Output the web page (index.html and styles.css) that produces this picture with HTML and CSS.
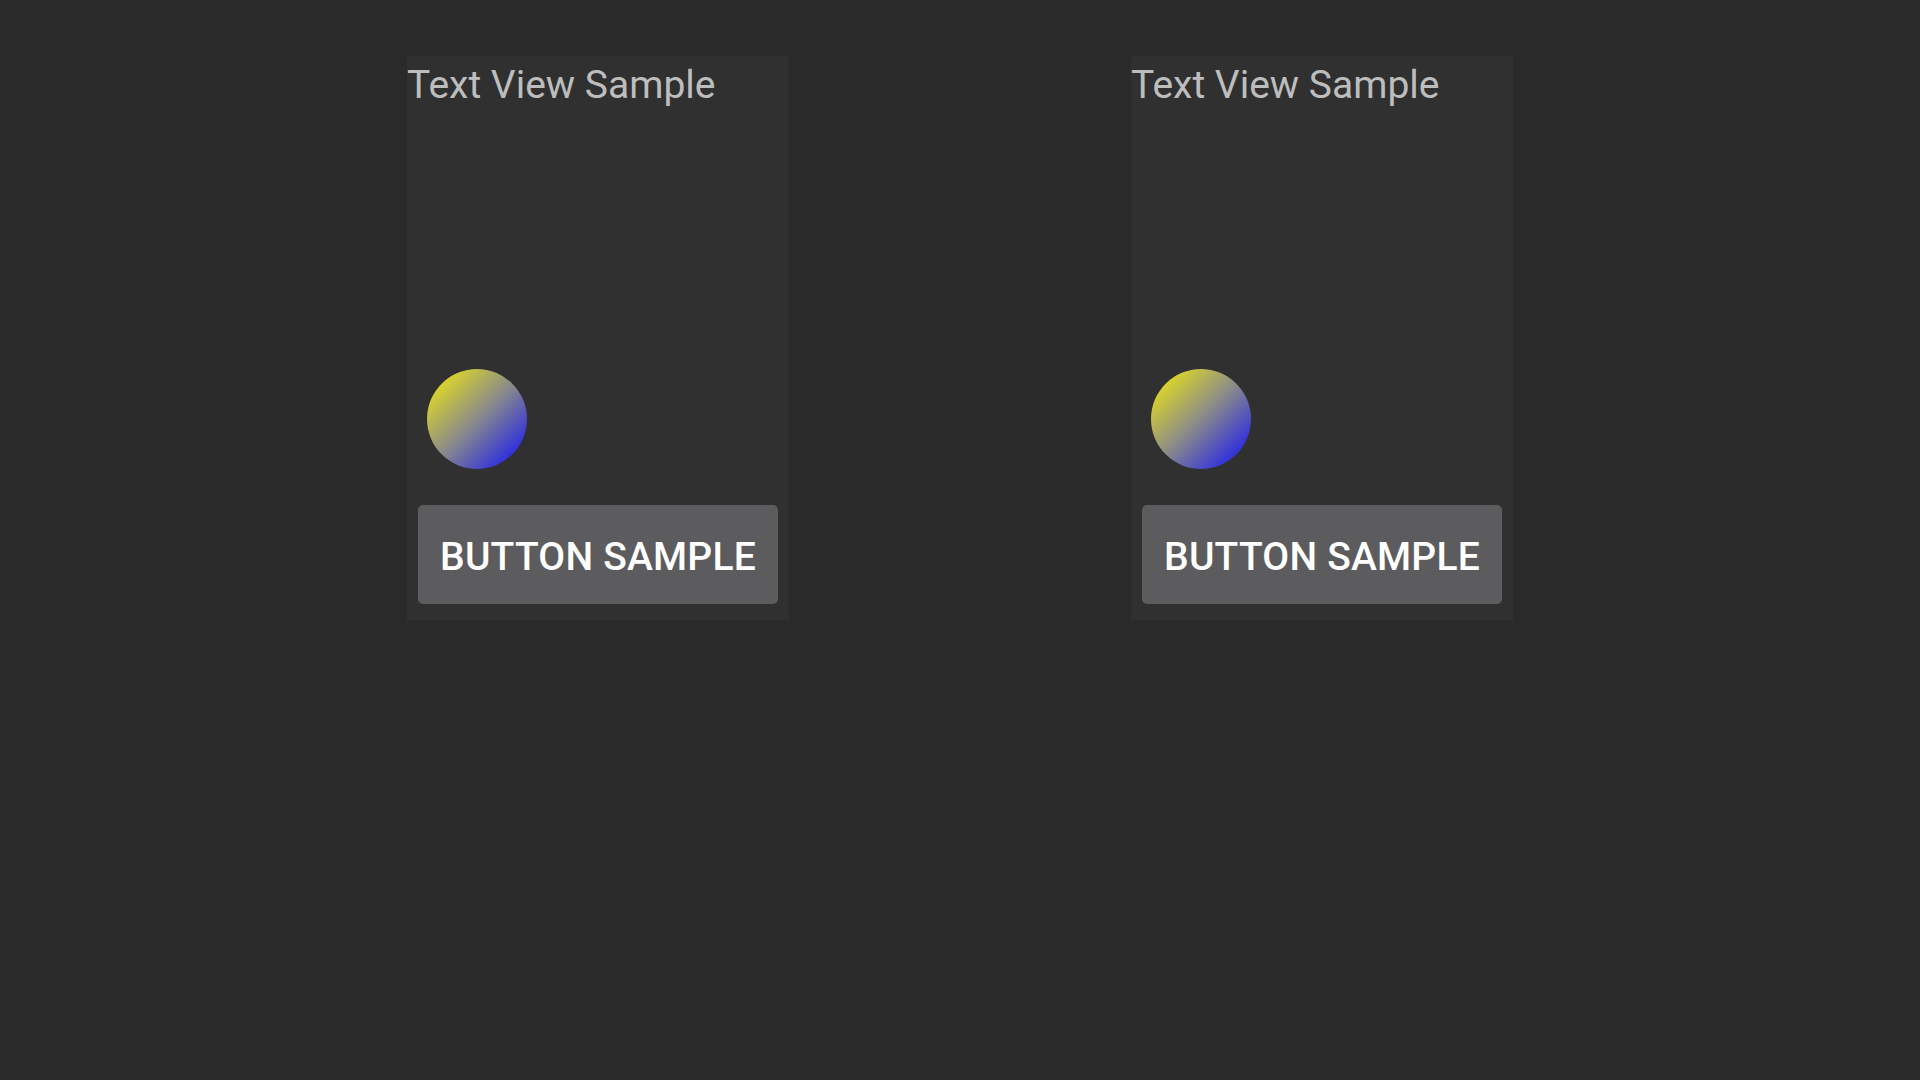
FILE: index.html
```html
<!DOCTYPE html>
<html>
<head>
<meta charset="utf-8">
<link rel="stylesheet" href="styles.css">
</head>
<body>
<main class="stage">
  <section class="panel">
    <div class="text-view">Text View Sample</div>
    <div class="ball"></div>
    <button class="btn">BUTTON SAMPLE</button>
  </section>
  <section class="panel">
    <div class="text-view">Text View Sample</div>
    <div class="ball"></div>
    <button class="btn">BUTTON SAMPLE</button>
  </section>
</main>
</body>
</html>
```
FILE: styles.css
```css
html, body {
  margin: 0;
  padding: 0;
  background: #2a2a2a;
  width: 1920px;
  height: 1080px;
  overflow: hidden;
  font-family: Roboto, "Liberation Sans", sans-serif;
}

.stage {
  display: flex;
  justify-content: center;
  gap: 342px;
  padding-top: 56px;
}

.panel {
  width: 382px;
  height: 564px;
  background: #303030;
  display: flex;
  flex-direction: column;
  box-sizing: border-box;
}

.text-view {
  font-size: 39px;
  line-height: 44px;
  color: #bdbdbd;
  padding-top: 7px;
  white-space: nowrap;
}

.ball {
  margin-top: auto;
  margin-left: 20px;
  width: 100px;
  height: 100px;
  border-radius: 50%;
  background: linear-gradient(135deg, #e6e01c 8%, #8a8a8a 50%, #2020ec 92%);
}

.btn {
  margin: 36px 11px 16px;
  height: 99px;
  border: none;
  border-radius: 5px;
  background: #5c5c5e;
  color: #ffffff;
  font-family: Roboto, "Liberation Sans", sans-serif;
  font-weight: 500;
  font-size: 39px;
  letter-spacing: 0.2px;
  padding: 4px 0 0;
}
```
